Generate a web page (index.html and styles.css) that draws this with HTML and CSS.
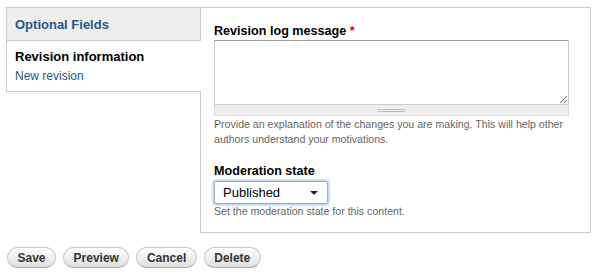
FILE: index.html
```html
<!DOCTYPE html>
<html lang="en">
<head>
    <meta charset="UTF-8">
    <title>Edit content</title>
    <link rel="stylesheet" href="styles.css">
</head>
<body>
    <div class="vertical-tabs">
        <ul class="tabs-list">
            <li class="tab-header">Optional Fields</li>
            <li class="tab selected">
                <strong>Revision information</strong>
                <a href="#">New revision</a>
            </li>
        </ul>
        <div class="pane">
            <div class="form-item">
                <label>Revision log message <span class="required">*</span></label>
                <div class="textarea-wrap">
                    <textarea rows="4"></textarea>
                    <div class="grippie"><span></span></div>
                </div>
                <div class="description">Provide an explanation of the changes you are making. This will help other authors understand your motivations.</div>
            </div>
            <div class="form-item">
                <label>Moderation state</label>
                <div class="select">
                    <span>Published</span>
                    <svg width="8" height="4" viewBox="0 0 8 4"><path d="M0 0h8L4 4z" fill="#222"/></svg>
                </div>
                <div class="description">Set the moderation state for this content.</div>
            </div>
        </div>
    </div>

    <div class="actions">
        <button>Save</button>
        <button>Preview</button>
        <button>Cancel</button>
        <button>Delete</button>
    </div>
</body>
</html>
```

FILE: styles.css
```css
body {
    font-family: "Liberation Sans", Arial, sans-serif;
    font-size: 13px;
    color: #000;
    margin: 0;
    padding: 7px 7px 0 6px;
    background: #fff;
}
.vertical-tabs {
    display: flex;
    align-items: flex-start;
}
.tabs-list {
    list-style: none;
    margin: 0;
    padding: 0;
    width: 193px;
    flex-shrink: 0;
    border-top: 1px solid #ccc;
    border-left: 1px solid #ccc;
}
.tab-header {
    background: #eee;
    border-bottom: 1px solid #ccc;
    height: 32px;
    line-height: 33px;
    padding-left: 8px;
    font-weight: bold;
    color: #24598c;
}
.tab {
    padding: 7px 8px 5px;
    border-bottom: 1px solid #ccc;
}
.tab.selected {
    background: #fff;
    margin-right: -1px;
    position: relative;
    z-index: 1;
}
.tab strong {
    display: block;
    line-height: 18px;
}
.tab a {
    display: block;
    color: #24598c;
    text-decoration: none;
    font-size: 12px;
    line-height: 20px;
}
.pane {
    flex: 1;
    border: 1px solid #ccc;
    padding: 14px 21px 13px 13px;
}
.form-item {
    margin-bottom: 15px;
}
.form-item:last-child {
    margin-bottom: 0;
}
label {
    display: block;
    font-weight: bold;
    font-size: 12.6px;
    line-height: 18px;
}
.required {
    color: #e00;
}
textarea {
    display: block;
    box-sizing: border-box;
    width: 100%;
    height: 65px;
    margin: 0;
    border: 1px solid #ccc;
    border-top-color: #999;
    resize: vertical;
    font-family: inherit;
}
.grippie {
    height: 10px;
    background: #eee;
    border: 1px solid #ddd;
    border-top: 0;
    display: flex;
    justify-content: center;
    align-items: center;
}
.grippie span {
    width: 27px;
    height: 3px;
    border-top: 1px solid #bbb;
    border-bottom: 1px solid #bbb;
    box-sizing: border-box;
}
.description {
    font-size: 10.6px;
    color: #666;
    line-height: 15px;
    margin-top: 1px;
}
.select {
    margin-top: 1px;
    width: 114px;
    height: 23px;
    box-sizing: border-box;
    border: 1px solid #aab;
    border-radius: 2px;
    box-shadow: 0 0 3px 1px #9ec0ee;
    display: flex;
    align-items: center;
    justify-content: space-between;
    padding: 0 9px 0 8px;
    font-size: 13px;
}
.select + .description {
    margin-top: 0;
}
.actions {
    display: flex;
    gap: 7px;
    margin-top: 14px;
    padding-left: 1px;
}
button {
    font-family: inherit;
    font-size: 12px;
    font-weight: bold;
    color: #333;
    padding: 0 9.5px;
    height: 21px;
    border: 1px solid #c8c8c8;
    border-bottom-color: #aaa;
    border-radius: 20px;
    background: linear-gradient(#fefefe, #e0e0e0);
    cursor: pointer;
}
```
